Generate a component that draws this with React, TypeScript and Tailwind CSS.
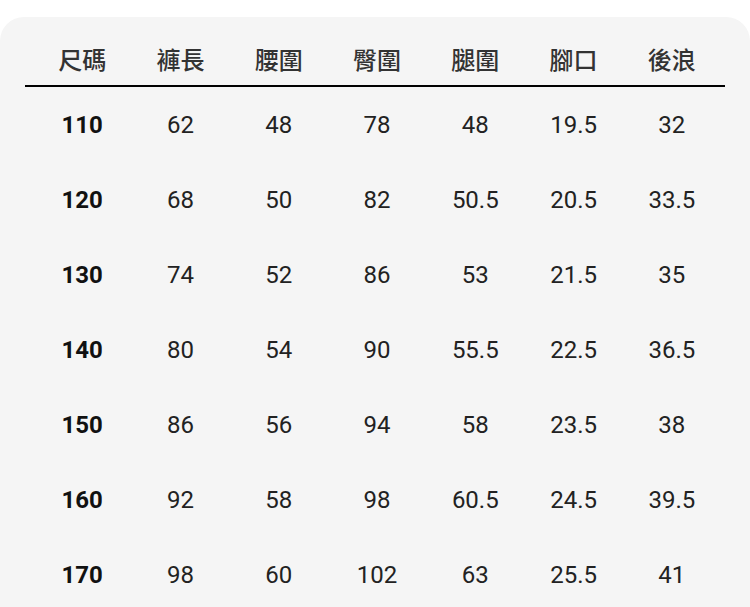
const headers = ["尺碼", "褲長", "腰圍", "臀圍", "腿圍", "腳口", "後浪"];

const rows = [
  ["110", "62", "48", "78", "48", "19.5", "32"],
  ["120", "68", "50", "82", "50.5", "20.5", "33.5"],
  ["130", "74", "52", "86", "53", "21.5", "35"],
  ["140", "80", "54", "90", "55.5", "22.5", "36.5"],
  ["150", "86", "56", "94", "58", "23.5", "38"],
  ["160", "92", "58", "98", "60.5", "24.5", "39.5"],
  ["170", "98", "60", "102", "63", "25.5", "41"],
];

export default function App() {
  return (
    <div className="h-[607px] w-[750px] overflow-hidden bg-white pt-[17px] font-['Roboto','Noto_Sans_CJK_TC',sans-serif]">
      <div className="h-[620px] rounded-[24px] bg-[#f5f5f5]">
        {/* Header */}
        <div className="mx-[25px] border-b-2 border-black pt-[26px] pb-[6px]">
          <div className="grid grid-cols-7 pl-[8px] pr-[4px]">
            {headers.map((h) => (
              <div
                key={h}
                className="text-center text-[24px] leading-[36px] font-medium text-[#333]"
              >
                {h}
              </div>
            ))}
          </div>
        </div>

        {/* Rows */}
        <div className="mx-[25px]">
          {rows.map((r) => (
            <div key={r[0]} className="grid h-[75px] grid-cols-7 items-center pl-[8px] pr-[4px]">
              {r.map((v, i) => (
                <div
                  key={i}
                  className={
                    i === 0
                      ? "text-center text-[24px] font-bold text-[#111]"
                      : "text-center text-[24px] text-[#222]"
                  }
                >
                  {v}
                </div>
              ))}
            </div>
          ))}
        </div>
      </div>
    </div>
  );
}
